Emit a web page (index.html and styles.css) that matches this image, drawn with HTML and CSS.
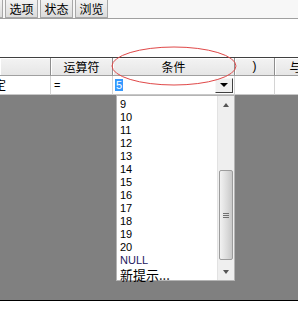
FILE: index.html
```html
<!DOCTYPE html>
<html lang="zh-CN">
<head>
<meta charset="UTF-8">
<title>条件</title>
<link rel="stylesheet" href="styles.css">
</head>
<body>
<div class="page">
  <div class="tabbar">
    <div class="tab tab-cut"></div>
    <div class="tab">选项</div>
    <div class="tab">状态</div>
    <div class="tab">浏览</div>
  </div>
  <div class="blank"></div>

  <div class="grid">
    <div class="hcell"></div>
    <div class="hcell">运算符</div>
    <div class="hcell">条件</div>
    <div class="hcell paren">)</div>
    <div class="hcell">与</div>

    <div class="dcell"><span class="cut">定</span></div>
    <div class="dcell">=</div>
    <div class="dcell cond">
      <span class="sel">5</span>
      <span class="dd-btn"><span class="tri-down"></span></span>
    </div>
    <div class="dcell"></div>
    <div class="dcell"></div>
  </div>

  <div class="gray"></div>
  <div class="footer"></div>

  <!-- dropdown list of the condition cell -->
  <div class="dropdown">
    <ul class="items">
      <li>9</li>
      <li>10</li>
      <li>11</li>
      <li>12</li>
      <li>13</li>
      <li>14</li>
      <li>15</li>
      <li>16</li>
      <li>17</li>
      <li>18</li>
      <li>19</li>
      <li>20</li>
      <li class="null">NULL</li>
      <li class="new">新提示...</li>
    </ul>
    <div class="scrollbar">
      <div class="arrow"><span class="tri-up small"></span></div>
      <div class="track-top"></div>
      <div class="thumb"><span class="grip"></span></div>
      <div class="arrow"><span class="tri-down small"></span></div>
    </div>
  </div>

  <!-- red annotation ring -->
  <svg class="ring" width="130" height="42" viewBox="0 0 130 42">
    <ellipse cx="65" cy="21" rx="62" ry="19" fill="none" stroke="#e04848" stroke-width="1"/>
  </svg>
</div>
</body>
</html>
```

FILE: styles.css
```css
body {
  margin: 0;
  background: #fff;
  font-family: "Liberation Sans", Arial, sans-serif;
  font-size: 11px;
  color: #000;
}

.page {
  position: relative;
  width: 298px;
  height: 309px;
  overflow: hidden;
}

.tabbar {
  display: flex;
  gap: 2px;
  height: 18px;
  background: #f7f7f7;
  border-bottom: 1px solid #a0a0a0;
}

.tab {
  box-sizing: border-box;
  flex: none;
  width: 33px;
  height: 18px;
  border: 1px solid #a8a8a8;
  border-top: none;
  background: linear-gradient(#f2f2f2, #dcdcdc);
  font-family: "Noto Sans CJK SC", sans-serif;
  font-size: 12px;
  line-height: 17px;
  text-align: center;
}

.tab-cut {
  margin-left: -30px;
}

.blank {
  height: 38px;
  border-bottom: 1px solid #404040;
}

.grid {
  display: grid;
  grid-template-columns: 51px 62px 122px 40px 42px;
  grid-template-rows: 18px 19px;
}

.hcell {
  background: linear-gradient(#f3f3f3, #e6e6e6);
  border-right: 1px solid #8e8e8e;
  border-bottom: 1px solid #a0a0a0;
  box-shadow: inset 1px 1px 0 #fff;
  font-family: "Noto Sans CJK SC", sans-serif;
  font-size: 12px;
  line-height: 17px;
  text-align: center;
}

.paren {
  font-family: "Liberation Sans", sans-serif;
}

.dcell {
  position: relative;
  border-right: 1px solid #d4d4d4;
  border-bottom: 1px solid #c8c8c8;
  line-height: 18px;
  padding-left: 3px;
  white-space: nowrap;
}

.cut {
  margin-left: -9px;
  font-family: "Noto Sans CJK SC", sans-serif;
  font-size: 12px;
}

.cond {
  display: flex;
  align-items: center;
  padding-left: 2px;
}

.sel {
  background: #3399ff;
  color: #fff;
  line-height: 12px;
  padding: 0 1px;
}

.dd-btn {
  margin-left: auto;
  margin-right: 1px;
  width: 16px;
  height: 13px;
  background: #f0f0f0;
  border: 1px solid #f8f8f8;
  border-right-color: #404040;
  border-bottom-color: #404040;
  display: flex;
  align-items: center;
  justify-content: center;
}

.tri-down {
  width: 0;
  height: 0;
  border-left: 4px solid transparent;
  border-right: 4px solid transparent;
  border-top: 4px solid #000;
}

.tri-up {
  width: 0;
  height: 0;
  border-left: 4px solid transparent;
  border-right: 4px solid transparent;
  border-bottom: 4px solid #000;
}

.small {
  border-left-width: 3px;
  border-right-width: 3px;
  border-top-color: #555;
  border-bottom-color: #555;
}

.gray {
  height: 205px;
  background: #808080;
  border-bottom: 1px solid #000;
}

.footer {
  height: 8px;
  background: #fff;
}

.dropdown {
  position: absolute;
  left: 116px;
  top: 95px;
  width: 117px;
  height: 184px;
  display: flex;
  background: #fff;
  border: 1px solid #b4b4b4;
}

.items {
  flex: 1;
  margin: 0;
  padding: 2px 0 0 3px;
  list-style: none;
}

.items li {
  height: 13px;
  line-height: 13px;
}

.items .null {
  color: #1c2060;
}

.items .new {
  height: 15px;
  margin-top: 1px;
  font-family: "Noto Sans CJK SC", sans-serif;
  font-size: 13px;
  line-height: 14px;
}

.scrollbar {
  width: 16px;
  display: flex;
  flex-direction: column;
  background: #efefef;
  border-left: 1px solid #e2e2e2;
}

.arrow {
  height: 17px;
  display: flex;
  align-items: center;
  justify-content: center;
}

.track-top {
  height: 57px;
}

.thumb {
  height: 90px;
  margin: 0 1px;
  border: 1px solid #9c9c9c;
  border-radius: 2px;
  background: linear-gradient(90deg, #f2f2f2, #dadada 60%, #c8c8c8);
  display: flex;
  align-items: center;
  justify-content: center;
  box-sizing: border-box;
}

.grip {
  width: 6px;
  height: 5px;
  background: repeating-linear-gradient(#707070 0 1px, transparent 1px 2px);
}

.scrollbar .arrow:last-child {
  margin-top: auto;
}

.ring {
  position: absolute;
  left: 109px;
  top: 45px;
}
```
